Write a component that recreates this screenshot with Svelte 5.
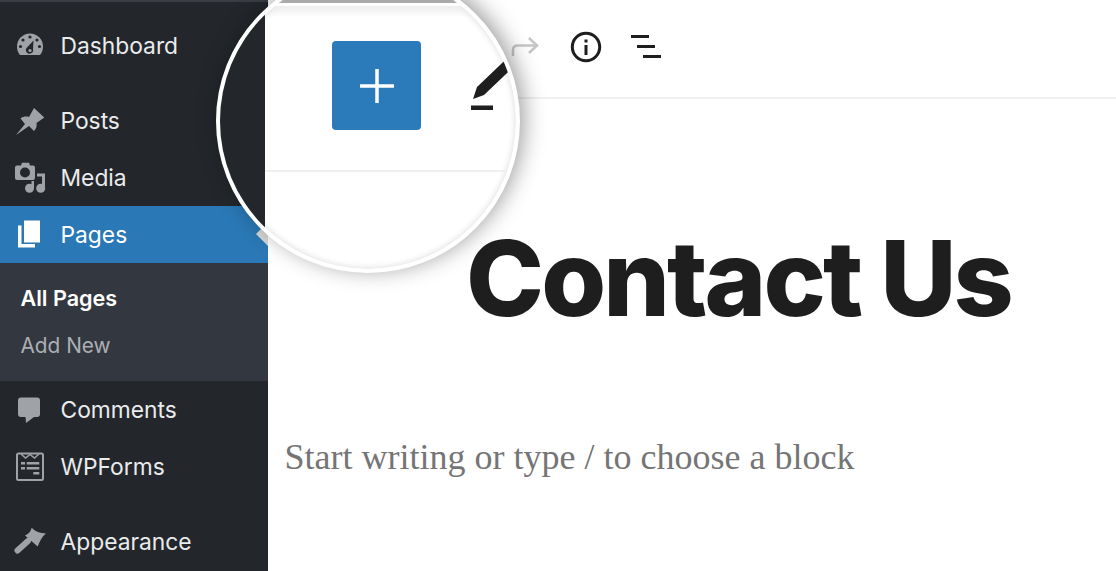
<script>
  const subItems = [
    { label: 'All Pages', active: true },
    { label: 'Add New', active: false }
  ];
</script>

<div class="page">
  <aside class="sidebar">
    <div class="item gap-after">
      <svg class="icon" viewBox="0 0 32 32">
        <path d="M6 25C4 23 3 20 3 16.5 3 9 9 3.5 16 3.5S29 9 29 16.5C29 20 28 23 26 25Z" />
        <g class="cut">
          <circle cx="16" cy="7" r="1.6" /><circle cx="9" cy="10" r="1.6" /><circle cx="23" cy="10" r="1.6" />
          <circle cx="6.5" cy="16.5" r="1.6" /><circle cx="25.5" cy="16.5" r="1.6" />
          <path d="M19.5 10.5 L19 19 A3.6 3.6 0 1 1 13 17.5Z" />
        </g>
        <circle cx="16" cy="20.5" r="1.6" />
      </svg>
      <span>Dashboard</span>
    </div>
    <div class="item">
      <svg class="icon" viewBox="0 0 32 32">
        <path d="M2 30L11 19 6.500 13.500C9 11.500 12 11 15 12L20 3 30.300 12.500 22.500 18C23 21 22.500 23.500 20 26L15 21Z" />
      </svg>
      <span>Posts</span>
    </div>
    <div class="item">
      <svg class="icon" viewBox="0 0 32 32">
        <path fill-rule="evenodd" d="M3 3.500H7L8 .8H15L16 3.500H19A2 2 0 0 1 21 5.500V16A2 2 0 0 1 19 18H3A2 2 0 0 1 1 16V5.500A2 2 0 0 1 3 3.500ZM11 5.500A5 5 0 1 0 11 15.500 5 5 0 1 0 11 5.500Z" />
        <path d="M23 11.500H31V26H28V14.500H23Z" />
        <path d="M17.500 19H20V26H17.500Z" />
        <circle cx="15.500" cy="26.300" r="4.500" /><circle cx="26.700" cy="26.300" r="4.500" />
      </svg>
      <span>Media</span>
    </div>
    <div class="item current">
      <svg class="icon" viewBox="0 0 32 32">
        <path d="M10 1.500H26V23.500H10Z" />
        <path d="M4 6.500H7.500V25H21V28.500H4Z" />
      </svg>
      <span>Pages</span>
      <i class="pointer"></i>
    </div>
    <div class="submenu">
      {#each subItems as sub}
        <div class="sub-item" class:active={sub.active}>{sub.label}</div>
      {/each}
    </div>
    <div class="item">
      <svg class="icon" viewBox="0 0 32 32">
        <path d="M7 3.500H23A3 3 0 0 1 26 6.500V20A3 3 0 0 1 23 23H20L12 29 11.500 23H7A3 3 0 0 1 4 20V6.500A3 3 0 0 1 7 3.500Z" />
      </svg>
      <span>Comments</span>
    </div>
    <div class="item gap-after">
      <svg class="icon" viewBox="0 0 32 32">
        <rect x="3" y="2.500" width="26" height="26.500" rx="1.500" fill="none" stroke="currentColor" stroke-width="2" />
        <path d="M7 3L11.500 7 16 3.500 20.500 7 25 3" fill="none" stroke="currentColor" stroke-width="1.500" />
        <path d="M7 11H11V13.500H7ZM12.700 11H25.300V13.500H12.700ZM7 16H11V18.500H7ZM12.700 16H25.300V18.500H12.700ZM19.300 21H25.300V23.500H19.300Z" />
      </svg>
      <span>WPForms</span>
    </div>
    <div class="item">
      <svg class="icon" viewBox="0 0 32 32">
        <path d="M3.500 24.500L14 15" fill="none" stroke="currentColor" stroke-width="6" stroke-linecap="round" />
        <path d="M11 9.500C15 8 17 5 17.700 1.800 21 5.500 26 7.500 32 7.500 28 10.500 26 15 23.700 20.500Z" />
      </svg>
      <span>Appearance</span>
    </div>
  </aside>

  <main class="editor">
    <div class="toolbar">
      <svg class="redo" viewBox="0 0 30 22">
        <path d="M2 20V14C2 11 4 9.500 7 9.500H26M18 2L26 9.500 18 17" />
      </svg>
      <svg class="info" viewBox="0 0 32 32">
        <circle cx="16" cy="16" r="13.700" />
        <path d="M16 14V24M16 8.500V11.500" />
      </svg>
      <div class="outline">
        <i></i><i></i><i></i>
      </div>
    </div>
    <h1>Contact Us</h1>
    <p>Start writing or type / to choose a block</p>
  </main>

  <div class="lens">
    <div class="lens-top"></div>
    <div class="lens-side"></div>
    <div class="lens-main">
      <div class="lens-toolbar">
        <div class="add-btn">
          <svg viewBox="0 0 34 34"><path d="M17 0V34M0 17H34" /></svg>
        </div>
        <svg class="pen" viewBox="0 0 60 70">
          <path d="M2 52L6 40 49 -1 56 7 13 48Z" />
          <path d="M0 58.500H22V63H0Z" />
        </svg>
      </div>
    </div>
  </div>
</div>

<style>
  :global(body) {
    margin: 0;
    background: #fff;
  }

  .page {
    position: relative;
    display: flex;
    width: 1116px;
    height: 571px;
    overflow: hidden;
    font-family: Inter, "Liberation Sans", sans-serif;
  }

  .sidebar {
    box-sizing: border-box;
    flex: 0 0 268px;
    padding-top: 17px;
    background: #23272c;
    color: #eaebec;
    font-size: 22.800px;
    box-shadow: inset 0 2px 0 #3a3e44;
  }

  .item {
    position: relative;
    display: flex;
    align-items: center;
    gap: 14.500px;
    height: 57px;
    padding-left: 14px;
  }

  .gap-after {
    margin-bottom: 18px;
  }

  .icon {
    flex: none;
    width: 32px;
    height: 32px;
    fill: #9fa2a6;
    color: #9fa2a6;
  }

  .cut {
    fill: #23272c;
  }

  .current {
    background: #2a78b5;
    color: #fff;
  }

  .current .icon {
    fill: #fff;
  }

  .pointer {
    position: absolute;
    right: 0;
    top: 16px;
    border: 12px solid transparent;
    border-right-color: #d8d8d8;
    border-left: 0;
  }

  .submenu {
    height: 118px;
    box-sizing: border-box;
    padding-top: 11.500px;
    background: #33373f;
    color: #abafb4;
    font-size: 20.800px;
  }

  .sub-item {
    display: flex;
    align-items: center;
    height: 47px;
    padding-left: 20.500px;
  }

  .sub-item.active {
    color: #fff;
    font-size: 21.600px;
    font-weight: 600;
  }

  .editor {
    flex: 1;
    min-width: 0;
    color: #1e1e1e;
  }

  .toolbar {
    display: flex;
    align-items: center;
    height: 97px;
    padding-left: 243px;
    border-bottom: 2px solid #f0f0f0;
  }

  .redo {
    width: 30px;
    height: 22px;
    margin-bottom: 4px;
    fill: none;
    stroke: #c6c6c6;
    stroke-width: 2.500;
  }

  .info {
    width: 32px;
    height: 32px;
    margin: 0 0 4px 29px;
    fill: none;
    stroke: #1e1e1e;
    stroke-width: 3;
  }

  .outline {
    display: flex;
    flex-direction: column;
    gap: 7.500px;
    margin: 0 0 4px 29px;
  }

  .outline i {
    display: block;
    width: 18px;
    height: 2.500px;
    background: #1e1e1e;
  }

  .outline i:nth-child(2) {
    margin-left: 6px;
  }

  .outline i:nth-child(3) {
    margin-left: 12px;
  }

  h1 {
    margin: 114px 0 0 198px;
    font-size: 105px;
    font-weight: 800;
    line-height: 130px;
    letter-spacing: -2.950px;
    white-space: nowrap;
  }

  p {
    margin: 92px 0 0 16.500px;
    font-family: "Liberation Serif", serif;
    font-size: 36px;
    line-height: 44px;
    color: #757575;
    white-space: nowrap;
  }

  /* magnifier over the editor toolbar */
  .lens {
    position: absolute;
    left: 216px;
    top: -31px;
    display: flex;
    box-sizing: border-box;
    width: 304px;
    height: 304px;
    overflow: hidden;
    border: 4px solid #fff;
    border-radius: 50%;
    background: #fff;
    box-shadow: 4px -3px 22px rgba(0, 0, 0, 0.38), inset 0 0 7px rgba(0, 0, 0, 0.16);
  }

  .lens-top {
    position: absolute;
    left: 0;
    right: 0;
    top: 0;
    height: 44px;
    background: linear-gradient(#a9a9a9 30px, #fff 30px, #fff 33px, #ececec 33px, rgba(255, 255, 255, 0) 44px);
  }

  .lens-side {
    flex: 0 0 45px;
    background: #23272c;
  }

  .lens-main {
    flex: 1;
    min-width: 0;
  }

  .lens-toolbar {
    display: flex;
    box-sizing: border-box;
    height: 199px;
    padding: 68px 0 0 67px;
    border-bottom: 2px solid #efefef;
  }

  .add-btn {
    display: flex;
    align-items: center;
    justify-content: center;
    flex: none;
    width: 89px;
    height: 89px;
    border-radius: 4px;
    background: #2b7bba;
  }

  .add-btn svg {
    width: 34px;
    height: 34px;
    fill: none;
    stroke: #fff;
    stroke-width: 3.500;
  }

  .pen {
    flex: none;
    width: 60px;
    height: 70px;
    margin: 6px 0 0 50px;
    overflow: visible;
    fill: #1e1e1e;
  }
</style>
